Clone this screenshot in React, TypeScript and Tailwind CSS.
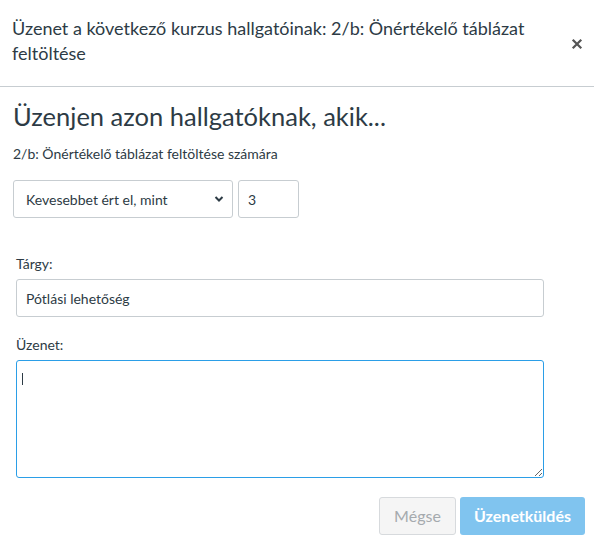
import { useState } from "react";

const font = { fontFamily: "Lato, 'Noto Sans', sans-serif" };

export default function App() {
  const [mode, setMode] = useState("less");
  const [score, setScore] = useState("3");
  const [subject, setSubject] = useState("Pótlási lehetőség");
  const [body, setBody] = useState("");

  return (
    <div className="w-[594px] h-[544px] bg-white text-[#2d3b45] overflow-hidden" style={font}>
      <header className="h-[87px] border-b border-[#c7cdd1] flex items-center justify-between pl-3 pr-[7px]">
        <h1 className="text-[18px] leading-[25px] w-[540px] pb-[4px]">
          Üzenet a következő kurzus hallgatóinak: 2/b: Önértékelő táblázat feltöltése
        </h1>
        <button className="text-[#555] w-5 h-5 flex items-center justify-center mt-[2px]">
          <svg width="12" height="12" viewBox="0 0 12 12">
            <path d="M2.5 2.5 L9.5 9.5 M9.5 2.5 L2.5 9.5" stroke="currentColor" strokeWidth="2.2" strokeLinecap="square" />
          </svg>
        </button>
      </header>

      <div className="pl-[13px] pr-[51px] pt-[14px]">
        <h2 className="text-[25.5px] leading-[30px] font-normal">Üzenjen azon hallgatóknak, akik...</h2>
        <p className="text-[14px] leading-[18px] mt-[14px]">2/b: Önértékelő táblázat feltöltése számára</p>

        <div className="flex gap-[5px] mt-[17px]">
          <div className="relative">
            <select
              value={mode}
              onChange={e => setMode(e.target.value)}
              className="appearance-none w-[220px] h-[38px] border border-[#c7cdd1] rounded-[3px] pl-[12px] text-[14px] bg-white outline-none"
              style={font}
            >
              <option value="less">Kevesebbet ért el, mint</option>
              <option value="more">Többet ért el, mint</option>
            </select>
            <svg className="absolute right-[9px] top-[15px] pointer-events-none" width="10" height="8" viewBox="0 0 10 8">
              <path d="M1.5 2 L5 5.5 L8.5 2" stroke="#2d3b45" strokeWidth="2" fill="none" />
            </svg>
          </div>
          <input
            value={score}
            onChange={e => setScore(e.target.value)}
            className="w-[61px] h-[38px] border border-[#c7cdd1] rounded-[3px] px-[9px] text-[14px] outline-none"
            style={font}
          />
        </div>

        <div className="pl-[3px] mt-[37px]">
          <label className="block text-[14px] leading-[18px]">Tárgy:</label>
          <input
            value={subject}
            onChange={e => setSubject(e.target.value)}
            className="mt-[6px] w-[528px] h-[38px] border border-[#c7cdd1] rounded-[3px] px-[9px] text-[14px] outline-none"
            style={font}
          />

          <label className="block text-[14px] leading-[18px] mt-[19px]">Üzenet:</label>
          <div className="relative mt-[6px] w-[528px]">
            <textarea
              value={body}
              autoFocus
              onChange={e => setBody(e.target.value)}
              className="block w-[528px] h-[118px] border border-[#2b9ee7] rounded-[3px] px-[6px] py-[10px] text-[14px] outline-none caret-[#2d3b45]"
              style={font}
            />
            {/* blinking caret stand-in while empty */}
            {body === "" && (
              <span className="absolute left-[6px] top-[13px] w-[1px] h-[12px] bg-[#2d3b45] pointer-events-none" />
            )}
          </div>
        </div>
      </div>

      <div className="flex justify-end gap-[4px] pr-[9px] mt-[19px]">
        <button
          disabled
          className="w-[77px] h-[38px] border border-[#d7dadd] bg-[#f5f5f5] rounded-[3px] text-[16px] text-[#a5aaae]"
          style={font}
        >
          Mégse
        </button>
        <button
          disabled
          className="w-[125px] h-[38px] bg-[#80c4ef] rounded-[3px] text-[16px] font-bold text-white"
          style={font}
        >
          Üzenetküldés
        </button>
      </div>
    </div>
  );
}
